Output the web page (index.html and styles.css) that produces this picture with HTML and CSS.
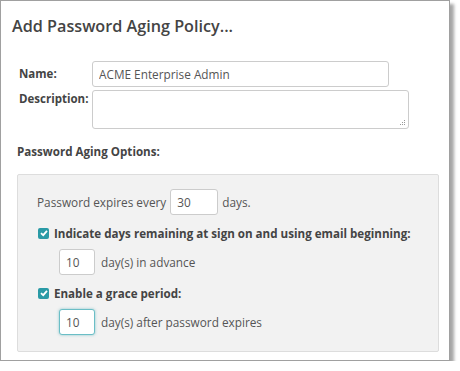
FILE: index.html
```html
<!DOCTYPE html>
<html lang="en">
<head>
    <meta charset="UTF-8">
    <title>Add Password Aging Policy</title>
    <link rel="stylesheet" href="styles.css">
</head>
<body>
    <div class="dialog">
        <h1 class="dialog-title">Add Password Aging Policy...</h1>

        <div class="field-grid">
            <label class="field-label" for="name">Name:</label>
            <input type="text" id="name" class="text-input name-input" value="ACME Enterprise Admin">

            <label class="field-label" for="desc">Description:</label>
            <div class="textarea-wrap">
                <textarea id="desc" class="text-input desc-input"></textarea>
                <svg class="grip" width="6" height="6" viewBox="0 0 6 6">
                    <rect x="4" y="0" width="1" height="1" fill="#999"/>
                    <rect x="2" y="2" width="1" height="1" fill="#999"/>
                    <rect x="4" y="2" width="1" height="1" fill="#999"/>
                    <rect x="0" y="4" width="1" height="1" fill="#999"/>
                    <rect x="2" y="4" width="1" height="1" fill="#999"/>
                    <rect x="4" y="4" width="1" height="1" fill="#999"/>
                </svg>
            </div>
        </div>

        <h2 class="section-title">Password Aging Options:</h2>

        <div class="options-panel">
            <div class="option-row">
                <span>Password expires every</span>
                <input type="text" class="text-input num-input wide" value="30">
                <span>days.</span>
            </div>

            <div class="check-row">
                <span class="check-box">
                    <svg width="8" height="8" viewBox="0 0 8 8"><path d="M1 4.2 L3.2 6.2 L7 1.8" fill="none" stroke="#fff" stroke-width="1.8"/></svg>
                </span>
                <span>Indicate days remaining at sign on and using email beginning:</span>
            </div>
            <div class="option-row indent">
                <input type="text" class="text-input num-input" value="10">
                <span>day(s) in advance</span>
            </div>

            <div class="check-row">
                <span class="check-box">
                    <svg width="8" height="8" viewBox="0 0 8 8"><path d="M1 4.2 L3.2 6.2 L7 1.8" fill="none" stroke="#fff" stroke-width="1.8"/></svg>
                </span>
                <span>Enable a grace period:</span>
            </div>
            <div class="option-row indent">
                <input type="text" class="text-input num-input focused" value="10">
                <span>day(s) after password expires</span>
            </div>
        </div>
    </div>
</body>
</html>
```

FILE: styles.css
```css
body {
    margin: 0;
    background: #fff;
    font-family: 'Open Sans', 'Liberation Sans', sans-serif;
    font-size: 11.8px;
    color: #555;
}

.dialog {
    width: 450px;
    height: 361px;
    box-sizing: border-box;
    border: 1px solid #a0a0a0;
    background: #fff;
    box-shadow: 4px 4px 3px rgba(0, 0, 0, 0.35);
    padding: 0 10px 0 16px;
}

.dialog-title {
    margin: 0 0 0 -5px;
    padding-top: 12px;
    font-size: 16.2px;
    font-weight: 600;
    color: #444;
    line-height: 26px;
}

.field-grid {
    display: grid;
    grid-template-columns: 73px auto;
    row-gap: 3px;
    margin-top: 22px;
    margin-left: 2px;
}

.field-label {
    font-size: 11.5px;
    font-weight: 700;
    color: #444;
    line-height: 18px;
}

.field-label:first-child {
    align-self: center;
}

.text-input {
    box-sizing: border-box;
    border: 1px solid #ccc;
    border-radius: 3px;
    font-family: inherit;
    font-size: 11.8px;
    color: #555;
    padding: 0 6px;
    background: #fff;
    outline: none;
}

.name-input {
    width: 297px;
    height: 26px;
}

.textarea-wrap {
    position: relative;
    width: 317px;
    height: 39px;
}

.desc-input {
    width: 317px;
    height: 39px;
    resize: none;
    display: block;
}

.grip {
    position: absolute;
    right: 3px;
    bottom: 3px;
}

.section-title {
    margin: 14px 0 0 0;
    font-size: 11.6px;
    font-weight: 700;
    color: #444;
    line-height: 18px;
}

.options-panel {
    width: 422px;
    height: 178px;
    box-sizing: border-box;
    margin-top: 13px;
    background: #f2f2f2;
    border: 1px solid #ddd;
    border-radius: 2px;
    padding: 14px 0 0 19px;
}

.option-row {
    display: flex;
    align-items: center;
    gap: 4px;
    height: 26px;
}

.option-row.indent {
    padding-left: 22px;
    gap: 6px;
}

.num-input {
    width: 36px;
    height: 26px;
}

.num-input.wide {
    width: 48px;
}

.num-input.focused {
    border-color: #6bbec6;
    box-shadow: 0 0 3px rgba(70, 170, 180, 0.6);
}

.check-row {
    display: flex;
    align-items: center;
    gap: 5px;
    height: 20px;
    margin: 8px 0 6px 1px;
    font-size: 11.6px;
    font-weight: 700;
    color: #444;
}

.check-box {
    width: 11px;
    height: 11px;
    border-radius: 2px;
    background: #2a9aa6;
    display: flex;
    align-items: center;
    justify-content: center;
}
```
